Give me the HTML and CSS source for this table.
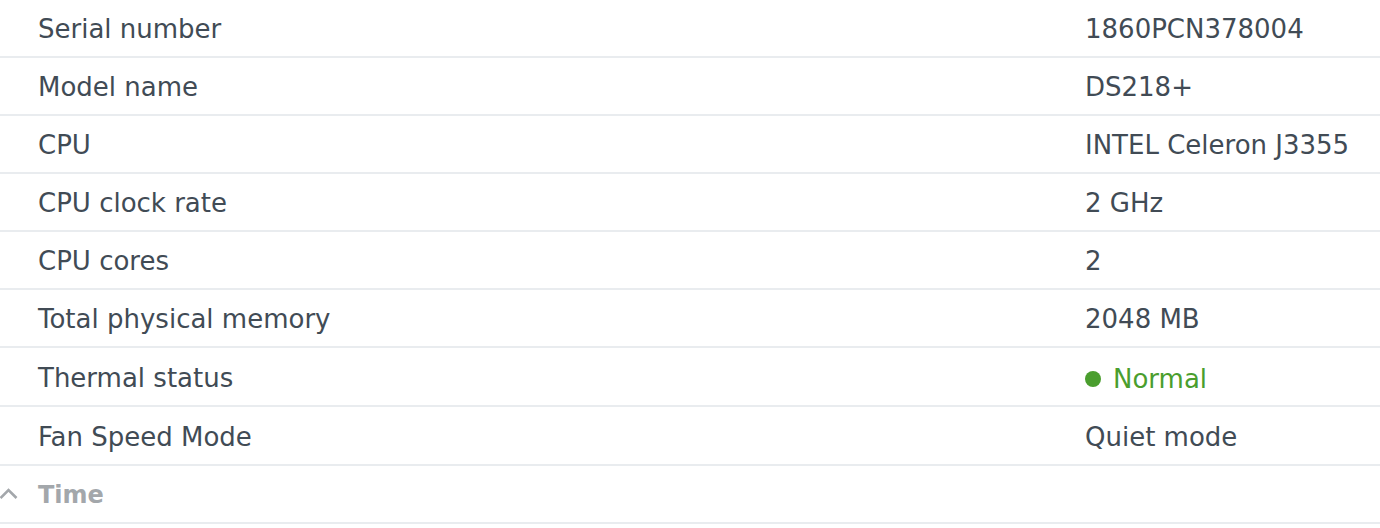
FILE: index.html
```html
<!DOCTYPE html>
<html>
<head>
<meta charset="utf-8">
<link rel="stylesheet" href="styles.css">
</head>
<body>
<div class="list">
  <div class="row"><div class="label">Serial number</div><div class="value">1860PCN378004</div></div>
  <div class="row"><div class="label">Model name</div><div class="value">DS218+</div></div>
  <div class="row"><div class="label">CPU</div><div class="value">INTEL Celeron J3355</div></div>
  <div class="row"><div class="label">CPU clock rate</div><div class="value">2 GHz</div></div>
  <div class="row"><div class="label">CPU cores</div><div class="value">2</div></div>
  <div class="row"><div class="label">Total physical memory</div><div class="value">2048 MB</div></div>
  <div class="row tall"><div class="label">Thermal status</div><div class="value ok"><span class="dot"></span>Normal</div></div>
  <div class="row tall"><div class="label">Fan Speed Mode</div><div class="value">Quiet mode</div></div>
  <div class="row section">
    <svg class="chev" width="18" height="14" viewBox="0 0 18 14"><path d="M0.5 12 L8.5 4 L16.5 12" fill="none" stroke="#a3a7ab" stroke-width="2.6"/></svg>
    <div class="title">Time</div>
  </div>
</div>
</body>
</html>
```
FILE: styles.css
```css
html, body {
  margin: 0;
  padding: 0;
  background: #ffffff;
}
body {
  font-family: "DejaVu Sans", Verdana, sans-serif;
  color: #414b55;
  overflow: hidden;
}
.list {
  display: flex;
  flex-direction: column;
}
.row {
  display: flex;
  align-items: center;
  height: 56px;
  padding-top: 2px;
  box-sizing: border-box;
  height: 58px;
  border-bottom: 2px solid #e9ecef;
  font-size: 26px;
}
.row.tall {
  height: 59px;
}
.label {
  width: 1085px;
  padding-left: 38px;
  box-sizing: border-box;
}
.value {
  display: flex;
  align-items: center;
}
.value.ok {
  color: #4a9e2e;
  padding-top: 3px;
}
.dot {
  width: 16px;
  height: 16px;
  border-radius: 50%;
  background: #4a9e2e;
  margin-right: 12px;
}
.chev {
  width: 18px;
  margin-right: 20px;
  margin-top: -4px;
}
.title {
  font-weight: bold;
  font-size: 24px;
  color: #a3a7ab;
}
```
